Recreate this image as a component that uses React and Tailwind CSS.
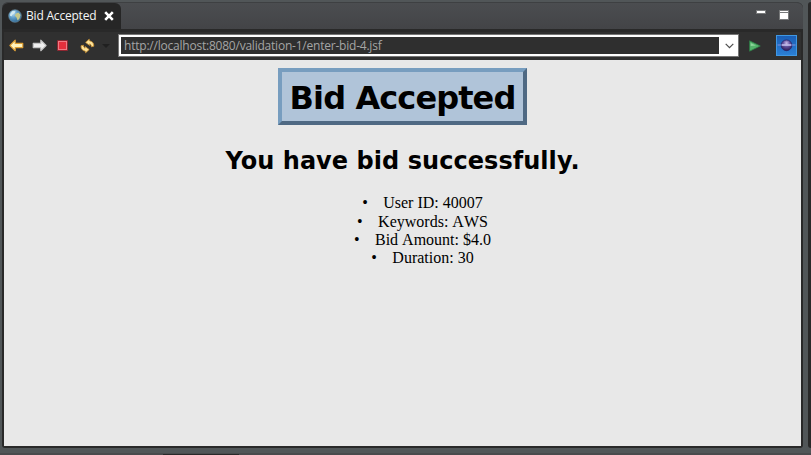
import React from 'react';

const UI_FONT = "font-['Open_Sans','Noto_Sans',sans-serif]";

function Globe() {
  return (
    <svg width="14" height="14" viewBox="0 0 14 14">
      <defs>
        <radialGradient id="sea" cx="35%" cy="30%" r="75%">
          <stop offset="0" stopColor="#b5dcf3" />
          <stop offset="0.5" stopColor="#5b9ac6" />
          <stop offset="1" stopColor="#2f658f" />
        </radialGradient>
      </defs>
      <circle cx="7" cy="7" r="6.3" fill="url(#sea)" stroke="#7394a6" strokeWidth=".6" />
      <path d="M2.2 5 4.5 2 7.5 2.2 6.5 4.3 4.5 5.6 3.6 7.2 2 6.8Z" fill="#d3eaf0" />
      <path d="M7.6 4.8 10.5 3.6 12.6 6 11.5 9.5 9.6 11.4 8.5 8.5 6.8 6.8Z" fill="#c3c78c" />
    </svg>
  );
}

function Arrow({ forward }) {
  return (
    <svg
      width="15"
      height="13"
      viewBox="0 0 15 13"
      className={forward ? '-scale-x-100' : ''}
    >
      <path
        d="M.9 6.5 6.2 1.2V4.4H13.8V8.6H6.2V11.8Z"
        fill={forward ? '#f0f0f0' : '#fff3bd'}
        stroke={forward ? '#c4c4c4' : '#e0a034'}
        strokeWidth="1.1"
        strokeLinejoin="round"
      />
    </svg>
  );
}

function Stop() {
  return (
    <svg width="11" height="11" viewBox="0 0 11 11">
      <rect x=".5" y=".5" width="10" height="10" rx=".5" fill="#f07a84" stroke="#8f2630" />
      <rect x="2" y="2" width="7" height="7" fill="#e52f3c" />
    </svg>
  );
}

function Refresh() {
  return (
    <svg width="15" height="16" viewBox="0 0 15 16">
      <g fill="#fde39a" stroke="#c98f30" strokeWidth=".8" strokeLinejoin="round">
        <path d="M5.6 4.4 9.2 1.2 9.5 2.8Q13.9 3.6 13.8 8.2L11.4 8.8Q11.4 6.6 9.8 5.8L9.6 7.4Z" />
        <path d="M9.2 11.6 5.6 14.8 5.3 13.2Q.9 12.4 1 7.8L3.4 7.2Q3.4 9.4 5 10.2L5.2 8.6Z" />
      </g>
    </svg>
  );
}

function Eclipse() {
  return (
    <svg width="21" height="21" viewBox="0 0 21 21">
      <defs>
        <linearGradient id="tile" x1="0" y1="0" x2="0" y2="1">
          <stop offset="0" stopColor="#1a5db4" />
          <stop offset="1" stopColor="#2b80d6" />
        </linearGradient>
        <radialGradient id="orb" cx="50%" cy="30%" r="70%">
          <stop offset="0" stopColor="#c9bce8" />
          <stop offset="0.4" stopColor="#6a5aa6" />
          <stop offset="1" stopColor="#2a1a55" />
        </radialGradient>
      </defs>
      <rect x=".5" y=".5" width="20" height="20" fill="url(#tile)" stroke="#3f97e2" />
      <circle cx="10.5" cy="10.3" r="5.4" fill="url(#orb)" stroke="#2a1c60" strokeWidth=".7" />
      <path d="M1.5 10H19.5" stroke="#8490dc" strokeWidth="1" />
      <path d="M6 10H15" stroke="#e3daf5" strokeWidth="1.2" />
    </svg>
  );
}

function TabBar() {
  return (
    <div className="flex h-[26px] items-start justify-between bg-linear-to-b from-[#4b4d50] to-[#434447]">
      <div className="flex h-[26px] w-[119px] items-center rounded-t-[6px] bg-[#262626] pl-[6px]">
        <Globe />
        <span className={`ml-[4px] w-[78px] whitespace-nowrap text-[12px] leading-[16px] tracking-[-0.2px] text-[#f5f5f5] ${UI_FONT}`}>
          Bid Accepted
        </span>
        <svg width="10" height="10" viewBox="0 0 10 10">
          <path d="M1.2 1.2 8.8 8.8M8.8 1.2 1.2 8.8" stroke="#fff" strokeWidth="2.6" />
        </svg>
      </div>
      <div className="flex items-start gap-[13px] pr-[14px] pt-[7px]">
        <div className="h-1 w-[10px] border border-[#77797a] bg-white" />
        <svg width="10" height="10" viewBox="0 0 10 10" shapeRendering="crispEdges">
          <rect width="10" height="10" fill="#77797a" />
          <rect x="1" y="1" width="8" height="1" fill="#fff" />
          <rect x="1" y="3" width="8" height="6" fill="#fff" />
        </svg>
      </div>
    </div>
  );
}

function Toolbar() {
  return (
    <div className="flex h-[31px] items-center border-t-[3px] border-[#292929] bg-[#303030] pb-px pl-[5px] pr-[4px]">
      <Arrow />
      <div className="ml-[8px] flex"><Arrow forward /></div>
      <div className="ml-[10px]"><Stop /></div>
      <div className="ml-[12px]"><Refresh /></div>
      <svg className="ml-[7px]" width="8" height="4" viewBox="0 0 8 4">
        <path d="M0 0H8L4 4Z" fill="#202020" />
      </svg>
      <div className="ml-[8px] flex h-[23px] w-[621px] items-stretch border border-[#777] bg-white p-[2px]">
        <div className={`flex flex-1 items-center bg-[#2f2f2f] pl-[3px] text-[12px] leading-[16px] tracking-[-0.22px] text-[#a5a5a5] ${UI_FONT}`}>
          http://localhost:8080/validation-1/enter-bid-4.jsf
        </div>
        <div className="flex w-[17px] items-center justify-center pl-[3px]">
          <svg width="9" height="6" viewBox="0 0 9 6">
            <path d="M.7.8 4.5 4.6 8.3.8" fill="none" stroke="#4d4d4d" strokeWidth="1.2" />
          </svg>
        </div>
      </div>
      <svg className="ml-[10px]" width="12" height="12" viewBox="0 0 12 12">
        <path d="M.6.8 11.3 6 .6 11.2Z" fill="#54b36b" stroke="#2d7c46" strokeWidth=".8" />
        <path d="M1.7 3 7 5.5 1.7 6Z" fill="#8dd49b" />
      </svg>
      <div className="ml-auto"><Eclipse /></div>
    </div>
  );
}

const details = ['User ID: 40007', 'Keywords: AWS', 'Bid Amount: $4.0', 'Duration: 30'];

function Page() {
  return (
    <main className="flex flex-1 flex-col items-center bg-[#e8e8e8] pt-2 text-black">
      <h1 className="flex h-[57px] w-[249px] items-center justify-center whitespace-nowrap border-4 border-t-[#779dbf] border-r-[#4f6983] border-b-[#4f6983] border-l-[#779dbf] bg-[#b0c4d9] pt-[3px] font-['DejaVu_Sans',sans-serif] text-[32px] font-bold leading-[39px] tracking-[-0.9px]">
        Bid Accepted
      </h1>
      <h2 className="mt-[22px] whitespace-nowrap font-['DejaVu_Sans',sans-serif] text-[24px] font-bold leading-[29px] tracking-[0.05px]">
        You have bid successfully.
      </h2>
      <ul className="mt-[18.2px] flex flex-col items-center pl-[40px] font-['Liberation_Serif',serif] text-[16px] leading-[18.4px] [font-kerning:none]">
        {details.map((item) => (
          <li key={item} className="flex">
            <span className="w-[21px]">•</span>
            <span className="whitespace-nowrap">{item}</span>
          </li>
        ))}
      </ul>
    </main>
  );
}

export default function App() {
  return (
    <div className="flex h-[455px] w-[811px] flex-col overflow-hidden bg-[#515658]">
      <div className="flex h-[448px] justify-between pl-[2px] pt-[2px]">
        <div className="flex w-[801px] flex-col overflow-hidden rounded-t-[6px] rounded-b-[3px] border-t border-[#3e4042] bg-[#292929]">
          <TabBar />
          <div className="flex flex-1 flex-col px-[2px] pb-[2px]">
            <Toolbar />
            <Page />
          </div>
        </div>
        <div className="w-[3px] rounded-tl-[3px] rounded-bl-[3px] bg-[#292929]" />
      </div>
      <div className="mt-[5px] flex h-[2px] items-end bg-[#494b4d] pl-[163px]">
        <div className="h-px w-[76px] bg-[#292929]" />
      </div>
    </div>
  );
}
